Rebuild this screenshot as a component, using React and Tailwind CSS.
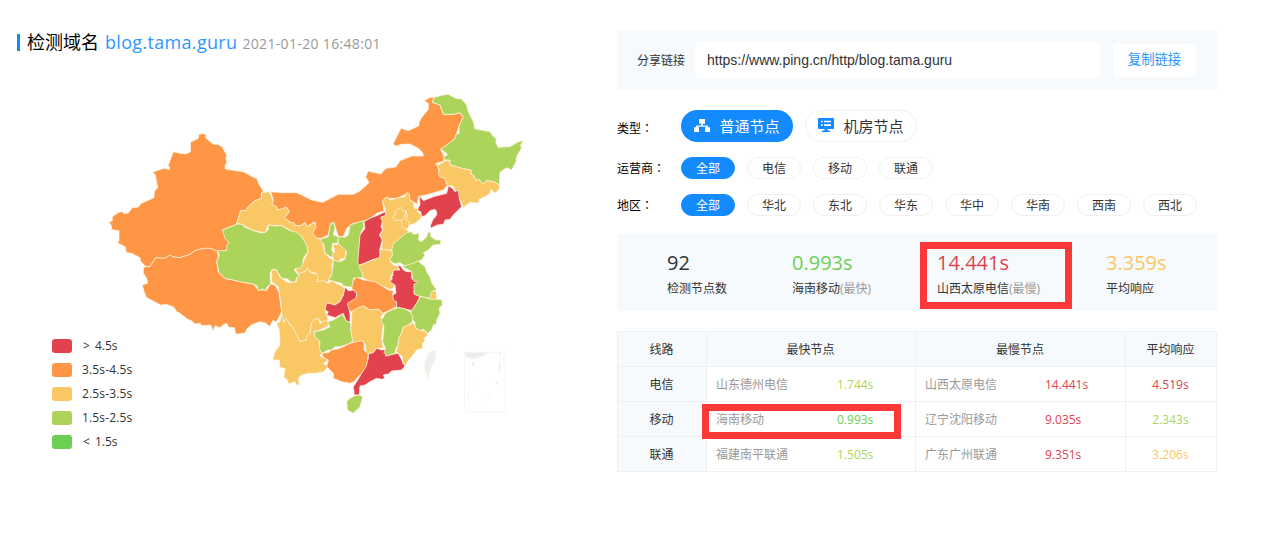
const RED = "#e1424d";
const ORANGE = "#ff9645";
const YELLOW = "#f9c764";
const LIME = "#add45a";

// Provinces, grouped by the map section whose origin their points are relative to.
const sections = [
  {
    origin: "translate(0 0)",
    shapes: [
      [ORANGE, "297,147 317,147 318,160 340,178 352,178 365,184 380,210 378,222 380,235 375,240 376,252 432,261 458,276 470,280 476,296 490,318 483,327 485,340 465,347 445,365 438,376 422,377 410,415 412,417 367,435 387,472 380,497 352,499 330,490 310,490 285,497 270,508 240,518 220,516 210,510 195,520 167,518 150,545 137,545 122,528 120,518 95,505 80,503 75,485 50,472 57,468 57,437 35,434 35,424 27,412 37,407 37,395 56,382 67,380 72,386 85,384 97,368 115,366 122,356 162,338 163,320 173,307 166,270 158,261 193,250 210,254 205,240 220,200 235,204 258,207 272,200 271,172 295,160"],
      [ORANGE, "512,320 540,323 590,323 605,330 635,345 668,352 715,328 760,328 780,318 807,293 797,275 805,258 842,267 858,250 888,246 900,227 935,213 970,213 968,203 955,190 930,177 905,178 885,184 880,175 903,130 925,137 957,122 957,113 963,100 985,73 985,55 973,48 990,37 1003,37 997,52 1020,60 1030,88 1060,88 1080,83 1090,97 1077,123 1070,145 1062,165 1022,193 1032,215 1032,228 1010,235 1018,262 1035,280 1042,302 1030,315 985,328 955,335 952,358 930,345 925,325 890,340 865,340 848,350 852,378 830,385 815,397 790,410 760,415 740,430 730,455 715,455 702,413 692,415 685,450 665,460 650,460 635,445 648,415 640,412 622,425 615,413 600,423 583,420 553,398 568,380 560,367 540,378 515,358 520,345"],
      [ORANGE, "137,545 150,545 167,518 195,520 210,510 220,516 240,518 270,508 285,497 310,490 330,490 352,499 355,515 350,530 355,560 375,580 430,592 460,597 475,615 500,615 512,597 525,600 537,622 545,680 535,700 528,712 520,705 508,725 497,714 480,710 455,719 440,732 436,744 407,748 403,728 386,727 380,715 368,720 360,728 345,722 340,738 332,720 305,722 300,715 284,717 276,708 262,702 240,685 230,680 222,667 200,658 182,660 140,638 132,620 127,600 143,595 140,580 130,565 130,548"],
      [YELLOW, "485,323 508,320 520,350 515,358 530,365 532,375 548,370 560,367 568,380 553,398 570,412 583,413 583,420 600,423 615,413 622,425 643,412 648,425 638,445 650,460 665,463 675,505 690,520 700,525 695,545 700,560 690,575 685,590 665,595 650,590 650,565 635,562 622,550 610,565 600,575 585,550 608,535 624,500 620,480 605,455 545,422 505,420 495,443 460,437 425,418 410,415 422,377 438,376 445,365 465,347 485,340"],
      [LIME, "412,417 425,418 435,427 460,437 480,443 495,443 505,433 505,420 525,423 545,422 570,437 590,442 605,455 620,480 624,500 610,520 608,535 603,550 585,550 583,556 600,575 590,580 585,592 572,590 563,582 545,580 535,565 530,555 518,553 510,565 512,597 500,607 498,617 487,612 475,617 470,602 460,597 430,592 400,585 375,580 357,562 350,530 358,510 352,497 380,497 380,482 387,472 375,460 367,435"],
    ],
  },
  {
    origin: "translate(630 0)",
    shapes: [
      [LIME, "373,37 400,30 415,28 437,40 455,42 470,60 474,78 480,90 490,110 495,132 540,140 550,155 558,160 558,175 565,187 600,185 625,170 640,167 632,180 634,190 620,215 618,230 605,255 590,248 575,258 570,262 568,300 550,290 530,287 520,298 505,282 498,287 490,270 483,268 483,255 455,250 440,245 420,240 420,225 405,225 400,215 412,210 410,205 392,193 427,167 432,165 440,145 447,147 447,123 460,97 450,83 430,88 400,88 390,60 367,52"],
      [YELLOW, "376,235 387,240 407,227 420,227 420,240 440,245 455,250 483,255 483,268 490,270 498,287 505,282 520,298 530,287 550,290 568,300 568,312 555,325 543,312 540,325 525,335 508,342 505,355 480,352 460,368 452,345 440,325 430,303 412,302 405,280 388,275 385,262 390,255"],
    ],
  },
  {
    origin: "translate(840 285)",
    shapes: [
      [RED, "118,47 130,62 160,50 200,40 205,18 215,23 225,35 235,30 238,55 245,80 220,105 210,118 195,120 190,133 172,135 155,143 150,140 158,120 170,105 170,95 165,88 150,92 135,107 125,110 122,95 110,90 120,75"],
    ],
  },
  {
    origin: "translate(630 285)",
    shapes: [
      [LIME, "160,122 162,140 152,160 148,190 145,245 155,262 157,280 160,292 130,295 128,322 100,318 95,310 55,300 65,285 68,265 70,240 90,245 105,238 110,215 85,195 83,170 105,172 115,165 120,135 140,128"],
      [LIME, "72,127 75,145 70,165 85,170 82,190 68,190 65,210 75,225 65,232 45,220 42,195 30,178 55,170 60,135"],
      [YELLOW, "68,192 80,195 84,190 108,212 105,236 92,236 90,245 70,240 67,220 75,215"],
      [YELLOW, "218,63 225,53 235,52 240,60 260,55 275,52 285,50 290,38 298,42 300,62 310,65 313,85 325,85 322,95 335,105 333,115 315,130 300,135 290,148 298,158 285,165 270,180 255,195 245,210 215,210 217,180 210,165 218,150 215,125 210,110 228,105 225,85"],
      [YELLOW, "262,88 272,82 278,92 290,93 283,110 287,118 270,120 255,122 248,110 255,105 255,95"],
      [YELLOW, "287,95 293,108 287,118 298,125 295,145 285,148 275,140 275,120 284,112"],
      [RED, "225,95 228,105 212,112 217,125 213,140 218,150 208,165 217,180 210,205 210,235 190,238 170,247 150,255 143,250 148,190 150,165 165,145 162,125 180,115 205,105"],
      [YELLOW, "150,255 190,240 210,232 210,208 245,212 248,225 238,240 250,255 270,262 265,270 250,275 240,295 255,310 250,325 240,328 220,320 190,308 160,295 157,280 148,262"],
      [LIME, "245,210 250,190 265,180 275,170 290,158 305,155 310,163 328,160 325,180 335,185 350,170 355,155 362,158 362,170 378,180 392,180 392,193 370,195 355,210 340,218 345,225 335,240 320,245 305,258 295,255 285,258 270,248 255,252 238,240 248,225"],
    ],
  },
  {
    origin: "translate(480 555)",
    shapes: [
      [YELLOW, "35,0 50,0 60,22 85,38 110,35 110,22 118,20 115,10 135,5 142,-5 155,10 168,10 175,20 170,35 190,32 205,40 215,33 250,50 255,60 240,95 225,105 200,100 195,120 200,135 205,150 190,160 170,145 155,160 150,195 140,210 120,215 105,195 85,155 75,150 65,160 65,120 60,80 55,50 35,35"],
      [YELLOW, "50,160 60,155 65,130 72,158 78,143 90,165 97,170 120,215 140,210 140,198 150,190 155,160 163,148 175,145 180,160 200,150 210,165 180,180 163,185 165,200 178,215 185,250 180,258 205,270 190,280 205,290 190,305 165,310 145,310 125,315 115,325 118,345 110,345 105,335 85,342 82,330 72,320 75,295 60,293 58,270 38,270 45,245 60,225 58,180"],
      [ORANGE, "280,30 290,22 312,30 345,35 370,50 385,60 400,62 398,75 410,90 410,110 395,118 370,130 355,118 330,120 310,108 275,125 260,115 255,95 275,90 290,80 290,70 275,55"],
      [YELLOW, "275,125 290,115 310,108 330,120 355,118 370,130 363,140 370,160 365,205 370,235 350,235 345,245 320,253 315,220 305,212 278,222 272,180 275,150"],
      [RED, "255,52 265,62 280,60 290,70 288,85 270,95 262,100 270,130 270,158 258,152 250,130 225,143 200,135 205,125 195,120 200,98 225,105 240,95 250,75"],
      [LIME, "240,138 247,132 258,152 272,158 272,180 278,215 265,222 240,230 225,230 215,240 205,240 185,250 178,235 180,215 165,200 163,185 190,180 210,170 203,155 220,150"],
      [ORANGE, "185,250 205,248 215,240 240,235 270,220 290,215 305,212 312,218 312,240 325,252 320,290 305,310 290,325 282,335 270,340 245,335 220,325 220,310 200,290 205,270 190,262"],
      [RED, "350,235 365,240 380,238 385,248 375,258 395,253 415,250 425,270 435,288 425,300 395,303 385,312 370,315 375,325 365,328 350,325 330,335 315,345 300,348 298,375 283,375 280,350 290,335 305,310 318,290 325,265 325,252 340,248"],
      [LIME, "285,377 298,375 308,380 300,410 280,430 262,420 260,395 270,385"],
    ],
  },
  {
    origin: "translate(810 555)",
    shapes: [
      [LIME, "110,-15 130,-20 145,-27 152,-20 165,-10 170,5 180,22 185,38 200,60 190,62 182,85 165,82 150,80 132,72 130,45 125,5 98,-10"],
      [RED, "82,-13 92,-12 100,0 110,5 125,5 125,25 135,35 142,33 142,40 132,42 132,72 150,80 140,100 127,122 105,117 80,112 80,95 70,90 68,75 78,70 75,45 60,35 68,25 60,28 68,18 70,0 90,0"],
      [YELLOW, "184,65 198,62 200,90 180,88"],
      [LIME, "150,80 165,82 182,88 215,88 218,103 208,115 210,130 200,150 200,160 190,165 185,180 173,190 160,178 150,182 135,172 135,158 125,145 122,125 140,100"],
      [LIME, "45,130 65,120 85,112 105,117 120,125 128,140 127,155 115,165 100,172 95,188 85,210 85,225 78,235 75,250 50,258 42,247 47,238 38,215 42,170 32,150 40,143"],
      [YELLOW, "132,158 135,172 150,182 165,182 173,195 162,205 165,213 158,220 158,235 140,240 125,260 112,275 108,286 98,280 98,260 78,245 85,225 85,210 95,188 100,172 115,165"],
      ["#eeeeee", "190,240 198,245 195,270 185,290 178,310 175,325 165,305 163,285 175,250"],
    ],
  },
];

function ChinaMap() {
  return (
    <svg viewBox="0 0 1290 1005" className="h-[335px] w-[430px]" strokeLinejoin="round">
      {sections.map((s) => (
        <g key={s.origin} transform={s.origin} stroke="#fdf3df" strokeOpacity="0.75" strokeWidth="3">
          {s.shapes.map(([fill, points]) => (
            <polygon key={points} points={points} fill={fill} />
          ))}
        </g>
      ))}
      <g transform="translate(810 555)" fill="#ededed">
        <rect x="283.5" y="247" width="123" height="178" fill="none" stroke="#f5f5f5" strokeWidth="3" />
        <path d="M284 248h75l-30 14-22 5-17-6z" />
        <path d="M306 278l9-3-3 12-7 2zM388 247h5v9h-5zM397 264l5-2-1 8zM387 272l4 8-1 28-4-2 1-14zM376 338l8-4-2 10zM307 346l7-8-2 6zM294 370l4 2v10l-3-4zM352 384l8-10-2 8zM328 402l6 0v3h-6zM234 221l4 0-2 4z" />
      </g>
    </svg>
  );
}

const legend = [
  ["bg-[#e1424d]", "> 4.5s", "pl-px [word-spacing:2px]"],
  ["bg-[#ff9645]", "3.5s-4.5s", "tracking-[0.15px]"],
  ["bg-[#f9c764]", "2.5s-3.5s", "tracking-[0.15px]"],
  ["bg-[#add45a]", "1.5s-2.5s", "tracking-[0.15px]"],
  ["bg-[#6dcf52]", "< 1.5s", "pl-px [word-spacing:2px]"],
];

function Pill({ active, children }) {
  return (
    <span
      className={
        "flex h-[22px] w-[54px] items-center justify-center rounded-full border pt-px text-xs " +
        (active ? "border-[#148aff] bg-[#148aff] text-white" : "border-[#f0f0f0] bg-white text-[#333]")
      }
    >
      {children}
    </span>
  );
}

function RowLabel({ children }) {
  return (
    <span className="w-16 shrink-0 text-xs whitespace-nowrap">
      {children}
      <span className="font-['Noto_Sans_CJK_TC',sans-serif]" lang="zh-TW">：</span>
    </span>
  );
}

function FilterRow({ label, options }) {
  return (
    <div className="flex h-[22px] items-center">
      <RowLabel>{label}</RowLabel>
      <div className="flex gap-3">
        {options.map((o, i) => (
          <Pill key={o} active={i === 0}>{o}</Pill>
        ))}
      </div>
    </div>
  );
}

function NodesIcon() {
  return (
    <svg viewBox="0 0 16 14" preserveAspectRatio="none" className="mb-px h-[13px] w-4" fill="currentColor">
      <path d="M5 0h6v5H8.7v2H14v2h2v5h-5V9h1.500V8.300h-9V9H5v5H0V9h2V7h5.300V5H5z" />
    </svg>
  );
}

function ServerIcon() {
  return (
    <svg viewBox="0 0 16 14" className="mb-[3px] h-[14px] w-4" fill="#148aff">
      <path fillRule="evenodd" d="M1 0h14a1 1 0 0 1 1 1v9a1 1 0 0 1-1 1H9.500v1.500H12V14H4v-1.500h2.500V11H1a1 1 0 0 1-1-1V1a1 1 0 0 1 1-1zM3 2.700v1.600h1.600V2.700zm3 0v1.600h7V2.700zM3 6.300v1.600h1.600V6.300zm3 0v1.600h7V6.300z" />
    </svg>
  );
}

function Stat({ className, value, color, label, note }) {
  return (
    <div className={"shrink-0 pt-[16px] whitespace-nowrap " + className}>
      <div className={"text-[20px] leading-[26px] " + color}>{value}</div>
      <div className="mt-[4px] text-xs leading-[18px] text-[#333]">
        {label}
        {note && <span className="text-[#999]">{note}</span>}
      </div>
    </div>
  );
}

const rows = [
  ["电信", "山东德州电信", "1.744s", "text-[#add45a]", "山西太原电信", "14.441s", "4.519s", "text-[#e1424d]"],
  ["移动", "海南移动", "0.993s", "text-[#6dcf52]", "辽宁沈阳移动", "9.035s", "2.343s", "text-[#add45a]"],
  ["联通", "福建南平联通", "1.505s", "text-[#add45a]", "广东广州联通", "9.351s", "3.206s", "text-[#f9c764]"],
];

function ResultTable() {
  const head = "flex items-center justify-center bg-[#f6fafd] pt-[2px] pr-px";
  return (
    <div className="relative mt-5 grid h-[141px] w-[600px] grid-cols-[88px_208px_209px_90px] grid-rows-[34px_34px_34px_34px] gap-px border border-[#eeeff1] bg-[#eeeff1] text-xs text-[#333]">
      <div className={head}>线路</div>
      <div className={head}>最快节点</div>
      <div className={head}>最慢节点</div>
      <div className={head}>平均响应</div>
      {rows.map(([line, fast, ft, fc, slow, st, avg, ac]) => (
        <div key={line} className="contents">
          <div className={head}>{line}</div>
          <div className="flex items-center bg-white pt-[2px] pl-[9px]">
            <span className="w-[121px] text-[#999]">{fast}</span>
            <span className={fc}>{ft}</span>
          </div>
          <div className="flex items-center bg-white pt-[2px] pl-[9px]">
            <span className="w-[120px] text-[#999]">{slow}</span>
            <span className="text-[#e1424d]">{st}</span>
          </div>
          <div className={"flex items-center justify-center bg-white pt-[2px] pr-px " + ac}>{avg}</div>
        </div>
      ))}
      <div className="absolute top-[72px] left-[84px] h-[35px] w-[199px] border-[7px] border-[#fd3838]" />
    </div>
  );
}

export default function App() {
  return (
    <div className="flex h-[540px] w-[1276px] overflow-hidden bg-white font-['Open_Sans','Noto_Sans_CJK_SC',sans-serif] text-black">
      <section className="w-[617px] shrink-0 pt-[30px]">
        <header className="flex h-[25px] items-center pl-[17px] whitespace-nowrap">
          <span className="h-[17px] w-[3px] bg-[#148aff]" />
          <span className="ml-[7px] text-[18px]">检测域名</span>
          <span className="ml-[6px] text-[18px] tracking-[0.32px] text-[#2e97fb]">blog.tama.guru</span>
          <span className="ml-[5px] pt-[2px] text-[14px] tracking-[0.34px] text-[#999]">2021-01-20 16:48:01</span>
        </header>
        <div className="mt-[30px] grid">
          <div className="col-start-1 row-start-1 pl-[100px]">
            <ChinaMap />
          </div>
          <ul className="col-start-1 row-start-1 flex flex-col gap-[10px] pt-[254px] pl-[52px]">
            {legend.map(([bg, text, spacing]) => (
              <li key={text} className="flex h-[14px] items-center gap-[10px] text-xs text-[#333]">
                <span className={"h-[14px] w-5 rounded-[3px] " + bg} />
                <span className={"-mt-px " + spacing}>{text}</span>
              </li>
            ))}
          </ul>
        </div>
      </section>

      <section className="w-[600px] shrink-0 pt-[30px]">
        <div className="flex h-[60px] items-center bg-[#f6fafd] pl-5">
          <span className="w-[58px] pt-[2px] text-xs text-[#333]">分享链接</span>
          <div className="flex h-9 w-[405px] items-center rounded-[3px] bg-white pl-[12px] font-['Liberation_Sans',sans-serif] text-[14px] text-[#333]">
            https://www.ping.cn/http/blog.tama.guru
          </div>
          <div className="ml-[13px] flex h-[33px] w-[83px] items-center justify-center rounded-[3px] bg-white text-[13.33px] text-[#2e97fb]">
            复制链接
          </div>
        </div>

        <div className="mt-5 flex h-8 items-center">
          <div className="flex pt-1">
            <RowLabel>类型</RowLabel>
          </div>
          <div className="flex gap-3 text-[15px]">
            <span className="flex h-8 w-28 items-center justify-center gap-[9px] rounded-full bg-[#148aff] text-white">
              <NodesIcon />
              普通节点
            </span>
            <span className="flex h-8 w-28 items-center justify-center gap-[9px] rounded-full border border-[#f0f0f0] text-[#333]">
              <ServerIcon />
              机房节点
            </span>
          </div>
        </div>
        <div className="mt-[15px] flex flex-col gap-[15px]">
          <FilterRow label="运营商" options={["全部", "电信", "移动", "联通"]} />
          <FilterRow label="地区" options={["全部", "华北", "东北", "华东", "华中", "华南", "西南", "西北"]} />
        </div>

        <div className="relative mt-[18px] flex h-[77px] bg-[#f6fafd] pl-[50px]">
          <Stat className="w-[125px]" value="92" color="text-[#333]" label="检测节点数" />
          <Stat className="w-[145px]" value="0.993s" color="text-[#6dcf52]" label="海南移动" note="(最快)" />
          <Stat className="w-[169px]" value="14.441s" color="text-[#e1424d]" label="山西太原电信" note="(最慢)" />
          <Stat className="w-[100px]" value="3.359s" color="text-[#f9c764]" label="平均响应" />
          <div className="absolute top-2 left-[303px] h-[67px] w-[152px] border-[7px] border-[#fd3838]" />
        </div>

        <ResultTable />
      </section>
    </div>
  );
}
